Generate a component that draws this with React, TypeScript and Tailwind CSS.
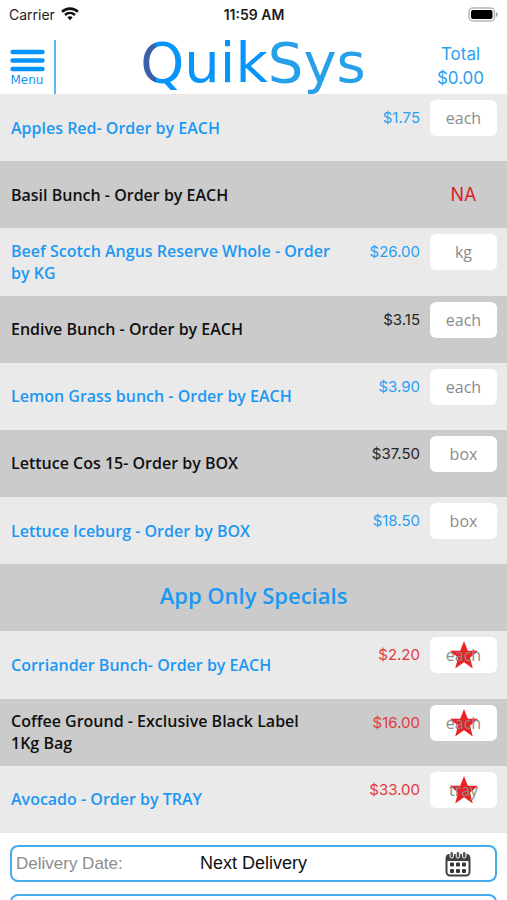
type Tone = "blue" | "black" | "red";

type Product = {
  name: string;
  price?: string;
  unit?: string;
  priceTone?: Tone;
  special?: boolean;
};

const products: Product[] = [
  { name: "Apples Red- Order by EACH", price: "$1.75", unit: "each", priceTone: "blue" },
  { name: "Basil Bunch - Order by EACH" },
  { name: "Beef Scotch Angus Reserve Whole - Order by KG", price: "$26.00", unit: "kg", priceTone: "blue" },
  { name: "Endive Bunch - Order by EACH", price: "$3.15", unit: "each", priceTone: "black" },
  { name: "Lemon Grass bunch - Order by EACH", price: "$3.90", unit: "each", priceTone: "blue" },
  { name: "Lettuce Cos 15- Order by BOX", price: "$37.50", unit: "box", priceTone: "black" },
  { name: "Lettuce Iceburg - Order by BOX", price: "$18.50", unit: "box", priceTone: "blue" },
];

const specials: Product[] = [
  { name: "Corriander Bunch- Order by EACH", price: "$2.20", unit: "each", priceTone: "red", special: true },
  { name: "Coffee Ground - Exclusive Black Label 1Kg\u00a0Bag", price: "$16.00", unit: "each", priceTone: "red", special: true },
  { name: "Avocado - Order by TRAY", price: "$33.00", unit: "tray", priceTone: "red", special: true },
];

const priceColors: Record<Tone, string> = {
  blue: "text-[#2b9ff2]",
  black: "text-[#262626]",
  red: "text-[#e23b3e]",
};

function StatusBar() {
  return (
    <div className="grid h-7 grid-cols-3 items-center pr-2 pl-[9px] font-['Inter',sans-serif] text-[14px] text-[#1c1c1c]">
      <div className="flex items-center gap-1.5">
        <span>Carrier</span>
        <svg className="h-[14px] w-[18px]" viewBox="0 0 18 14" fill="none" stroke="#111" strokeWidth="2.6" aria-hidden="true">
          <path d="M1 4.8C5.5.6 12.500.6 17 4.800" />
          <path d="M4 8C6.900 5.300 11.100 5.300 14 8" />
          <path d="M6.300 10.300 9 13.200l2.700-2.900C10.200 8.900 7.800 8.900 6.300 10.300z" fill="#111" stroke="none" />
        </svg>
      </div>
      <span className="text-center font-semibold">11:59 AM</span>
      <svg className="h-[15px] w-[31px] justify-self-end" viewBox="0 0 31 15" aria-hidden="true">
        <rect x="1" y="1" width="25.500" height="13" rx="4" fill="#fff" stroke="#b5b5b5" strokeWidth="1.500" />
        <rect x="3" y="3" width="21.500" height="9" rx="2" fill="#000" />
        <path d="M28 5.200c2.400.7 2.400 3.900 0 4.600z" fill="#a5a5a5" />
      </svg>
    </div>
  );
}

function Header() {
  return (
    <header className="flex h-[66px] items-stretch pt-3 text-[#0e95f5]">
      <button type="button" className="flex w-14 flex-col items-center border-r-2 border-r-[#5fb6f4] pt-[9px]">
        <svg className="h-[23px] w-[35px]" viewBox="0 0 35 23" stroke="#0795fb" strokeWidth="4.400" strokeLinecap="round" aria-hidden="true">
          <path d="M2.500 3h30M2.500 11.500h30M2.500 20h30" />
        </svg>
        <span className="font-['DejaVu_Sans','Noto_Sans',sans-serif] text-[12px] leading-4">Menu</span>
      </button>
      <h1 className="flex-1 pl-9 text-center font-['DejaVu_Sans',sans-serif] text-[56px] leading-[46px] font-normal">
        <span className="bg-[linear-gradient(90deg,#3c5fa9_36%,#0795fb_36%)] bg-clip-text text-transparent">Q</span>
        <span className="text-[#0795fb]">uik</span>
        <span className="text-[#279fe9]">Sys</span>
      </h1>
      <div className="w-[93px] pt-0.5 text-center font-['Inter',sans-serif] text-[17px] leading-6 text-[#2b9ff2]">
        <div>Total</div>
        <div>$0.00</div>
      </div>
    </header>
  );
}

function Star() {
  return (
    <svg className="absolute inset-x-0 top-1 mx-auto h-7 w-7" viewBox="0 0 28 28" fill="#ed2224" aria-hidden="true">
      <path d="M14 0l3.800 9.800H28l-8 7L22.800 27.500 14 21.300 5.200 27.500 8 16.800l-8-7h10.200z" />
    </svg>
  );
}

function ProductRow({ product }: { product: Product }) {
  const { name, price, unit, priceTone = "blue", special } = product;
  return (
    <li className="flex items-start bg-[#eaeaea] pr-2.5 pl-[11px] text-[#1c98f3] even:bg-[#cbcbcb] even:text-[#111]">
      <div className="flex min-w-0 flex-1 items-center self-stretch">
        <span className="max-w-[325px] font-['Open_Sans','Noto_Sans',sans-serif] text-[16px] leading-[22px] font-semibold">{name}</span>
      </div>
      {price ? (
        <>
          <span className={`mt-[13px] mr-2.5 ml-2 font-['Inter',sans-serif] text-[15px] leading-[22px] ${priceColors[priceTone]}`}>{price}</span>
          <div className="relative mt-1.5 h-9 w-[67px] rounded-md bg-white">
            {special && <Star />}
            <input
              type="text"
              inputMode="decimal"
              aria-label={`Quantity of ${name}`}
              placeholder={unit}
              className="relative h-full w-full bg-transparent text-center font-['Open_Sans','Noto_Sans',sans-serif] text-[16px] text-black placeholder:text-[#8b8b8b] placeholder:opacity-100"
            />
          </div>
        </>
      ) : (
        <span className="w-[67px] self-center text-center font-['Inter',sans-serif] text-[18px] text-[#d92428]">NA</span>
      )}
    </li>
  );
}

function CalendarIcon() {
  return (
    <svg className="h-[26px] w-[26px]" viewBox="0 0 26 26" aria-hidden="true">
      <rect x="1.500" y="4" width="23" height="20.500" rx="3.500" fill="#fff" stroke="#414141" strokeWidth="2" />
      <path d="M1 10V6.500A3.500 3.500 0 0 1 4.500 3h17A3.500 3.500 0 0 1 25 6.500V10z" fill="#414141" />
      <g fill="#555" stroke="#fff" strokeWidth="1">
        <rect x="5" y="0.500" width="3.500" height="6.500" rx="1.700" />
        <rect x="11.200" y="0.500" width="3.500" height="6.500" rx="1.700" />
        <rect x="17.500" y="0.500" width="3.500" height="6.500" rx="1.700" />
      </g>
      <g fill="#363636">
        <rect x="5" y="11.500" width="4" height="4" rx="1" />
        <rect x="11" y="11.500" width="4" height="4" rx="1" />
        <rect x="17" y="11.500" width="4" height="4" rx="1" />
        <rect x="5" y="18" width="4" height="4" rx="1" />
        <rect x="11" y="18" width="4" height="4" rx="1" />
        <rect x="17" y="18" width="4" height="4" rx="1" />
      </g>
    </svg>
  );
}

export default function App() {
  return (
    <div className="h-screen overflow-hidden bg-white">
      <StatusBar />
      <Header />
      <main>
        <ul className="grid min-h-[739px] auto-rows-fr">
          {products.map((product) => (
            <ProductRow key={product.name} product={product} />
          ))}
          <li className="flex items-center justify-center bg-[#cbcbcb] pb-1.5">
            <h2 className="font-['Open_Sans','Noto_Sans',sans-serif] text-[22px] leading-7 font-semibold text-[#1c98f3]">App Only Specials</h2>
          </li>
          {specials.map((product) => (
            <ProductRow key={product.name} product={product} />
          ))}
        </ul>
        <form className="flex flex-col gap-3 px-2.5 py-3 font-['Liberation_Sans',Arial,sans-serif]">
          <div className="grid h-[37px] grid-cols-[1fr_auto_1fr] items-center rounded-lg border-2 border-[#45a9ee] px-1">
            <label htmlFor="delivery-date" className="text-[17px] text-[#8c8c8c]">Delivery Date:</label>
            <input id="delivery-date" type="text" readOnly defaultValue="Next Delivery" className="w-36 text-center text-[18px] text-[#111]" />
            <button type="button" aria-label="Choose delivery date" className="mr-5 justify-self-end">
              <CalendarIcon />
            </button>
          </div>
          <input type="text" aria-label="Order notes" className="h-[37px] rounded-lg border-2 border-[#45a9ee] px-1" />
        </form>
      </main>
    </div>
  );
}
